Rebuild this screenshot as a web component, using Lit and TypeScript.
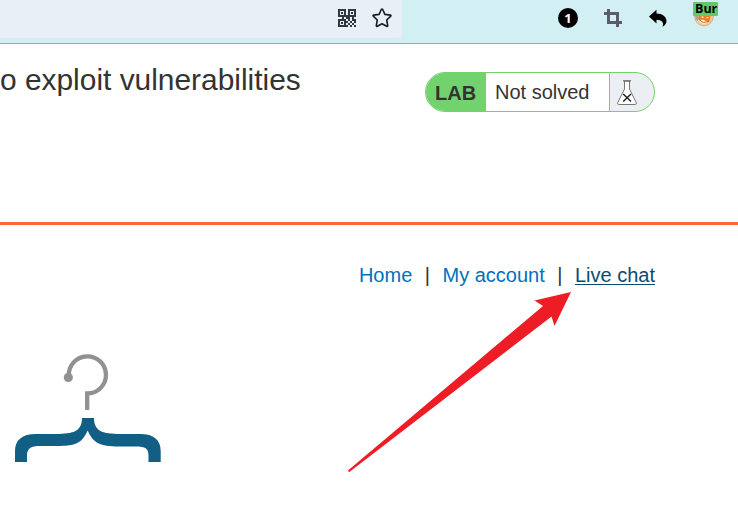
import { LitElement, html, css, svg } from "lit";
import { customElement } from "lit/decorators.js";

// Dark modules of the QR toolbar icon, on a 9 x 9 grid.
const QR_ROWS = [
  "1111.1111",
  "1..1.1..1",
  "1..1.1..1",
  "111111111",
  "..1.11.1.",
  "1111.1.11",
  "1..11.1.1",
  "1..1.1.1.",
  "11111.1.1",
];

@customElement("browser-bar")
class BrowserBar extends LitElement {
  static styles = css`
    :host {
      display: flex;
      height: 43px;
      background: #d2eff3;
      border-bottom: 1px solid #99aaae;
    }
    .address {
      width: 402px;
      height: 38px;
      box-sizing: border-box;
      padding: 8px 10px 0 0;
      display: flex;
      justify-content: flex-end;
      gap: 16px;
      background: #e8eff7;
      border-radius: 0 0 4px 0;
    }
    svg {
      display: block;
      flex: none;
    }
    .qr {
      margin-top: 1px;
    }
    .extensions {
      display: flex;
      margin-left: 156px;
    }
    .one {
      width: 20px;
      height: 20px;
      margin-top: 8px;
      border-radius: 50%;
      background: #000;
      color: #fff;
      font: bold 13px/20px "Open Sans", sans-serif;
      text-align: center;
    }
    .crop {
      margin: 9px 0 0 26px;
    }
    .undo {
      margin: 9px 0 0 27px;
    }
    .proxy {
      position: relative;
      width: 25px;
      height: 28px;
      margin-left: 24px;
    }
    .tag {
      position: absolute;
      left: 0;
      top: 2px;
      width: 25px;
      height: 14px;
      box-sizing: border-box;
      padding-left: 2px;
      border-radius: 1px;
      background: #65c766;
      color: #000;
      font: bold 12.500px/13px "Open Sans", sans-serif;
      white-space: nowrap;
    }
    .fox {
      position: absolute;
      left: 1px;
      top: 5px;
    }
  `;

  render() {
    return html`
      <div class="address">
        <svg class="qr" width="18" height="18" viewBox="0 0 18 18" fill="#30383e">
          ${QR_ROWS.flatMap((row, y) =>
            [...row].map((cell, x) =>
              cell === "1"
                ? svg`<rect x=${x * 2} y=${y * 2} width="2" height="2"></rect>`
                : null
            )
          )}
          <path d="M3 3h2v2H3zM13 3h2v2h-2zM3 13h2v2H3z" />
        </svg>
        <svg width="20" height="20" viewBox="0 0 20 20" fill="none" stroke="#1c1d22" stroke-width="1.600" stroke-linejoin="round">
          <path d="M9.300 1.500Q10 .6 10.700 1.500L12.900 6.400 18.400 7.100Q19.400 7.400 18.700 8.200L14.700 12 15.700 17.500Q15.700 18.700 14.600 18.300L10 15.700 5.400 18.300Q4.300 18.700 4.300 17.500L5.300 12 1.300 8.200Q.6 7.400 1.600 7.100L7.100 6.400Z" />
        </svg>
      </div>
      <div class="extensions">
        <div class="one">1</div>
        <svg class="crop" width="18" height="18" viewBox="0 0 18 18" fill="none" stroke="#5b5b69" stroke-width="3">
          <path d="M0 4.500H13.500V18M4.500 0V13.500H18" />
        </svg>
        <svg class="undo" width="20" height="20" viewBox="0 0 20 20">
          <path d="M0 7.500 7.500 .8V4.500C13.500 4.700 17.500 7.500 17.500 12 17.500 14.500 16 16.500 13.500 17.800 15.200 13.500 13 11 7.500 10.800V14.500Z" />
        </svg>
        <div class="proxy">
          <svg class="fox" width="20" height="22" viewBox="0 0 20 22">
            <circle cx="10" cy="11.500" r="9.300" fill="#f3cf9c" stroke="#d7ab78" />
            <path d="M1 9 5.500 12 3.500 16Q1 14 1 9Z" fill="#a9a39b" />
            <path d="M5 8 17 9 15.500 16.500 9 17.500 5 14Z" fill="#ec7c22" />
            <path d="M4 15.500 9 14.500 14 17 9.500 19Z" fill="#fff0d8" />
            <path d="M7.500 11.500h2v1.300H7.500zM12.500 12h2v1.300h-2z" fill="#fff" />
            <path d="M4.500 14 9 17.500 15 16.500" fill="none" stroke="#a65c2a" stroke-width=".8" />
          </svg>
          <div class="tag">Bur</div>
        </div>
      </div>
    `;
  }
}

@customElement("lab-status")
class LabStatus extends LitElement {
  static styles = css`
    :host {
      display: flex;
      width: 230px;
      height: 40px;
      box-sizing: border-box;
      border: 1px solid #72d36e;
      border-radius: 20px;
      overflow: hidden;
      background: #ebeef2;
      font: 20px/38px "Liberation Sans", Arial, sans-serif;
      color: #333332;
    }
    .lab {
      width: 60px;
      box-sizing: border-box;
      padding: 1px 0 0 9px;
      background: #72d36e;
      font-weight: bold;
    }
    .state {
      width: 123px;
      box-sizing: border-box;
      padding-left: 9px;
      background: #fff;
      white-space: nowrap;
    }
    .flask {
      flex: 1;
      border-left: 1px solid #72d36e;
    }
    svg {
      display: block;
      margin: 7px 0 0 7px;
    }
  `;

  render() {
    return html`
      <div class="lab">LAB</div>
      <div class="state">Not solved</div>
      <div class="flask">
        <svg width="20" height="26" viewBox="0 0 20 26" fill="none">
          <path d="M7.500 1V9L.8 22.500Q.2 24.500 1.700 24.500H18.300Q19.800 24.500 19.200 22.500L12.500 9V1Z" fill="#fff" stroke="#777" />
          <path d="M6 .8H14" stroke="#666" stroke-width="1.200" />
          <path d="M6.200 14 14 21.500M14 14 6.200 21.500" stroke="#222" stroke-width="1.500" />
        </svg>
      </div>
    `;
  }
}

@customElement("app-root")
class AppRoot extends LitElement {
  static styles = css`
    :host {
      display: block;
      position: relative;
      height: 509px;
      overflow: hidden;
      background: #fff;
      color: #333332;
      font: 20px/24px "Liberation Sans", Arial, sans-serif;
    }
    .banner {
      display: flex;
      height: 178px;
      border-bottom: 3px solid #ff6633;
    }
    .title {
      width: 301px;
      margin: 18px 124px 0 0;
      font-size: 29.900px;
      font-weight: normal;
      line-height: 36px;
      white-space: nowrap;
    }
    lab-status {
      margin-top: 28px;
    }
    nav {
      display: flex;
      justify-content: flex-end;
      gap: 12.500px;
      margin: 38px 83px 0 0;
      white-space: nowrap;
    }
    a {
      color: #0071bd;
      text-decoration: none;
    }
    a.current {
      color: #094b72;
      text-decoration: underline;
      text-decoration-thickness: 1px;
      text-underline-offset: 2px;
    }
    .logo {
      display: block;
      margin: 66px 0 0 14px;
    }
    .arrow {
      position: absolute;
      left: 347px;
      top: 291px;
    }
  `;

  render() {
    return html`
      <browser-bar></browser-bar>
      <header class="banner">
        <h2 class="title">o exploit vulnerabilities</h2>
        <lab-status></lab-status>
      </header>
      <nav>
        <a>Home</a><span>|</span><a>My account</a><span>|</span><a class="current">Live chat</a>
      </nav>
      <svg class="logo" width="148" height="110" viewBox="14 353 148 110">
        <path d="M68.800 376A18.600 18.600 0 1 1 87.200 393.500V410" fill="none" stroke="#8f9194" stroke-width="4.300" />
        <circle cx="68.300" cy="377.500" r="4.600" fill="#8f9194" />
        <path d="M15 462V451C15 440 22 434 36 434H52C71 434 82 433 82 418H94C94 433 105 434 124 434H140C154 434 160.700 440 160.700 451V462H148.500V456C148.500 449 146 446.800 138 446.500H119C100 446.500 93 443 87.700 430.500C82 443 76 446 57 446H38C30 446.500 27 449 27 456V462Z" fill="#125f85" />
      </svg>
      <svg class="arrow" width="226" height="182" viewBox="347 291 226 182">
        <path d="M571 292 534.500 300.500 543 306 348 470.500 349 472.300 551.500 316.500 554.500 326Z" fill="#ee1c25" />
      </svg>
    `;
  }
}
